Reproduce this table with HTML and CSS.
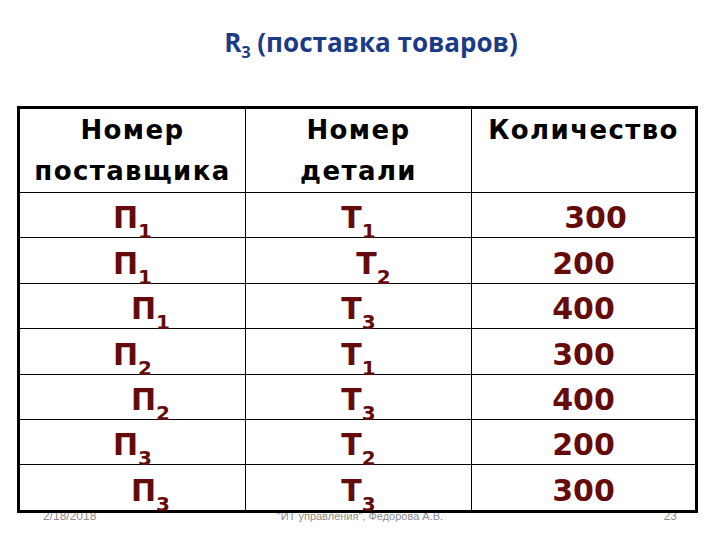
FILE: index.html
```html
<!DOCTYPE html>
<html lang="ru">
<head>
<meta charset="utf-8">
<title>R3 (поставка товаров)</title>
<link rel="stylesheet" href="styles.css">
</head>
<body>
<div class="slide">
  <h1 class="title">R<sub>3</sub> (поставка товаров)</h1>
  <table class="grid">
    <colgroup>
      <col class="c1"><col class="c2"><col class="c3">
    </colgroup>
    <tr class="head">
      <th>Номер<br>поставщика</th>
      <th>Номер<br>детали</th>
      <th>Количество</th>
    </tr>
    <tr>
      <td>П<sub>1</sub></td>
      <td>Т<sub>1</sub></td>
      <td class="shift-q">300</td>
    </tr>
    <tr>
      <td>П<sub>1</sub></td>
      <td class="shift-t">Т<sub>2</sub></td>
      <td>200</td>
    </tr>
    <tr>
      <td class="shift-p">П<sub>1</sub></td>
      <td>Т<sub>3</sub></td>
      <td>400</td>
    </tr>
    <tr>
      <td>П<sub>2</sub></td>
      <td>Т<sub>1</sub></td>
      <td>300</td>
    </tr>
    <tr>
      <td class="shift-p">П<sub>2</sub></td>
      <td>Т<sub>3</sub></td>
      <td>400</td>
    </tr>
    <tr>
      <td>П<sub>3</sub></td>
      <td>Т<sub>2</sub></td>
      <td>200</td>
    </tr>
    <tr>
      <td class="shift-p">П<sub>3</sub></td>
      <td>Т<sub>3</sub></td>
      <td>300</td>
    </tr>
  </table>
  <div class="footer">
    <span class="date">2/18/2018</span>
    <span class="author">"ИТ управления", Федорова А.В.</span>
    <span class="page">23</span>
  </div>
</div>
</body>
</html>
```
FILE: styles.css
```css
html, body {
  margin: 0;
  padding: 0;
  background: #ffffff;
}

.slide {
  width: 720px;
  height: 540px;
  overflow: hidden;
  display: flex;
  flex-direction: column;
}

.title {
  flex-shrink: 0;
  margin: 0;
  padding: 25px 0 0 22px;
  height: 80px;
  box-sizing: border-box;
  text-align: center;
  font-family: "Open Sans", "Liberation Sans", sans-serif;
  font-weight: 700;
  font-size: 26px;
  line-height: 34px;
  color: #1c3b87;
}

.title sub {
  font-size: 16px;
  line-height: 0;
  vertical-align: -6px;
}

.grid {
  flex-shrink: 0;
  position: relative;
  margin: 26px 0 0 17px;
  width: 678px;
  border-collapse: collapse;
  border: 3px solid #000;
  table-layout: fixed;
  font-family: "DejaVu Sans", Verdana, sans-serif;
  font-weight: 700;
}

.c1 { width: 227px; }
.c2 { width: 226px; }
.c3 { width: 225px; }

.grid th,
.grid td {
  border: 1px solid #000;
  padding: 0;
  text-align: center;
  vertical-align: top;
}

.head th {
  height: 82px;
  font-size: 26px;
  letter-spacing: 1.4px;
  line-height: 41px;
  color: #000;
  padding-top: 1px;
  box-sizing: border-box;
}

.grid td {
  height: 44.4px;
  box-sizing: border-box;
  font-size: 30px;
  line-height: 39px;
  padding-top: 5.4px;
  color: #650b0b;
}

.grid td sub {
  font-size: 20px;
  line-height: 0;
  vertical-align: -10px;
}

.grid td.shift-p { padding-left: 36px; }
.grid td.shift-t { padding-left: 30px; }
.grid td.shift-q { padding-left: 24px; }

.footer {
  flex-shrink: 0;
  display: grid;
  grid-template-columns: 1fr auto 1fr;
  padding: 0 43px;
  margin-top: -4px;
  font-family: "Liberation Sans", Arial, sans-serif;
  font-size: 12px;
  line-height: 14px;
  color: #8c8c8c;
}

.footer .author {
  font-size: 11px;
}

.footer .page {
  text-align: right;
}
```
